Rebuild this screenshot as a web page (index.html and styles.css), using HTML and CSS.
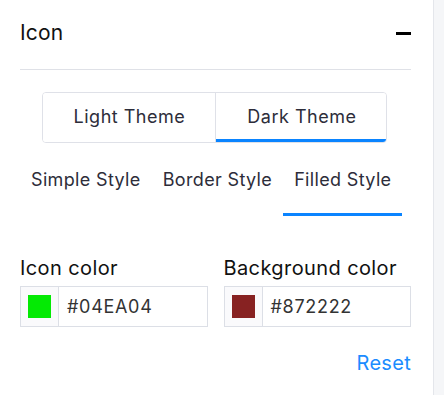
FILE: index.html
```html
<!DOCTYPE html>
<html lang="en">
<head>
    <meta charset="UTF-8">
    <meta name="viewport" content="width=device-width, initial-scale=1.0">
    <title>Icon settings</title>
    <link rel="stylesheet" href="styles.css">
</head>
<body>
    <div class="panel">
        <div class="section-head">
            <span class="section-title">Icon</span>
            <span class="collapse"></span>
        </div>

        <!-- Theme switch -->
        <div class="theme-row">
            <div class="theme-switch">
                <button class="theme-btn">Light Theme</button>
                <button class="theme-btn active">Dark Theme</button>
            </div>
        </div>

        <!-- Style tabs -->
        <div class="style-tabs">
            <button class="style-tab">Simple Style</button>
            <button class="style-tab">Border Style</button>
            <button class="style-tab active">Filled Style</button>
        </div>

        <div class="colors">
            <div class="color-field">
                <label>Icon color</label>
                <div class="color-input">
                    <span class="swatch-box"><span class="swatch swatch-green"></span></span>
                    <span class="hex">#04EA04</span>
                </div>
            </div>
            <div class="color-field">
                <label>Background color</label>
                <div class="color-input">
                    <span class="swatch-box"><span class="swatch swatch-red"></span></span>
                    <span class="hex">#872222</span>
                </div>
            </div>
        </div>

        <div class="actions">
            <a class="reset" href="#">Reset</a>
        </div>
    </div>
</body>
</html>
```

FILE: styles.css
```css
body {
    margin: 0;
    background: #f5f6f8;
    font-family: Inter, "Noto Sans", sans-serif;
    color: #2d2d3a;
}
.panel {
    width: 391px;
    height: 395px;
    padding: 0 22px 0 20px;
    background: #fff;
    border-right: 1px solid #e4e6eb;
    box-sizing: content-box;
}
.section-head {
    height: 69px;
    display: flex;
    align-items: center;
    justify-content: space-between;
    border-bottom: 1px solid #dfe1e7;
}
.section-title {
    font-size: 21px;
    letter-spacing: 0.2px;
    color: #111;
    margin-top: -5px;
}
.collapse {
    width: 15px;
    height: 3px;
    background: #000;
    margin-top: -3px;
}
.theme-row {
    display: flex;
    justify-content: center;
    padding-top: 22px;
    padding-right: 2px;
}
.theme-switch {
    display: flex;
    border: 1px solid #dfe1e8;
    border-radius: 4px;
    overflow: hidden;
}
.theme-btn {
    font-family: inherit;
    font-size: 18px;
    letter-spacing: 0.5px;
    color: #2d2d3a;
    background: #fff;
    border: 0;
    height: 49px;
    padding: 0 30px 2px 31px;
    white-space: nowrap;
    cursor: pointer;
}
.theme-btn + .theme-btn {
    border-left: 1px solid #dfe1e8;
}
.theme-btn.active {
    box-shadow: inset 0 -3px 0 #0a84ff;
}
.style-tabs {
    display: flex;
    margin-top: 18px;
}
.style-tab {
    flex: none;
    font-family: inherit;
    font-size: 18px;
    letter-spacing: 0.35px;
    color: #2d2d3a;
    background: none;
    border: 0;
    padding: 0 11px 16px;
    height: 55px;
    white-space: nowrap;
    border-bottom: 3px solid transparent;
    cursor: pointer;
}
.style-tab.active {
    border-bottom-color: #0a84ff;
}
.colors {
    display: grid;
    grid-template-columns: 1fr 1fr;
    gap: 16px;
    margin-top: 40px;
}
.color-field label {
    display: block;
    font-size: 20px;
    letter-spacing: 0.4px;
    color: #111;
    margin-bottom: 6px;
}
.color-input {
    display: flex;
    height: 39px;
    border: 1px solid #dcdfe6;
}
.swatch-box {
    width: 37px;
    display: flex;
    align-items: center;
    justify-content: center;
    background: #fafafc;
    border-right: 1px solid #dcdfe6;
}
.swatch {
    width: 23px;
    height: 23px;
}
.swatch-green { background: #04ea04; }
.swatch-red { background: #872222; }
.hex {
    display: flex;
    align-items: center;
    padding-left: 8px;
    font-size: 18px;
    letter-spacing: 0.7px;
    color: #333;
}
.actions {
    display: flex;
    justify-content: flex-end;
    margin-top: 24px;
}
.reset {
    font-size: 20px;
    letter-spacing: 0.3px;
    color: #1b8cff;
    text-decoration: none;
}
```
